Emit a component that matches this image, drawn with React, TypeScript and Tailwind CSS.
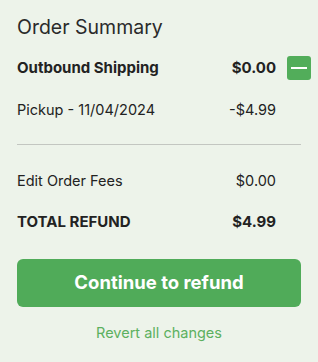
import React from "react";

export default function App() {
  return (
    <div
      className="w-[318px] h-[362px] bg-[#edf3ea] text-[#222] overflow-hidden"
      style={{ fontFamily: "Inter, 'Open Sans', sans-serif" }}
    >
      <div className="pl-[17px] pr-[17px] pt-[13px]">
        <h2 className="text-[19.5px] leading-[28px] font-normal text-[#2a2a2a]">Order Summary</h2>
        <div className="mt-[15px] flex items-center h-[24px]">
          <span className="flex-1 text-[15px] font-bold">Outbound Shipping</span>
          <span className="text-[15px] font-bold text-right">$0.00</span>
          <button className="ml-[11px] -mr-[10px] w-[24px] h-[24px] rounded-[3px] bg-[#52ad5a] flex items-center justify-center">
            <span className="block w-[16px] h-[2px] bg-white" />
          </button>
        </div>
        <div className="mt-[18px] flex items-center h-[24px] pr-[25px]">
          <span className="flex-1 text-[14.5px]">Pickup - 11/04/2024</span>
          <span className="text-[14.5px] text-right">-$4.99</span>
        </div>
        <div className="mt-[22px] h-px bg-[#c3c6c1]" />
        <div className="mt-[24px] flex items-center h-[24px] pr-[25px]">
          <span className="flex-1 text-[14.5px]">Edit Order Fees</span>
          <span className="text-[14.5px] text-right">$0.00</span>
        </div>
        <div className="mt-[17px] flex items-center h-[24px] pr-[25px]">
          <span className="flex-1 text-[15px] font-bold">TOTAL REFUND</span>
          <span className="text-[15px] font-bold text-right">$4.99</span>
        </div>
        <button className="mt-[25px] w-full h-[48px] rounded-[6px] bg-[#50ab59] text-white text-[18.5px] font-bold flex items-center justify-center">
          Continue to refund
        </button>
        <div className="mt-[16px] text-center text-[14.5px] leading-[20px] text-[#5cb05f]">Revert all changes</div>
      </div>
    </div>
  );
}
